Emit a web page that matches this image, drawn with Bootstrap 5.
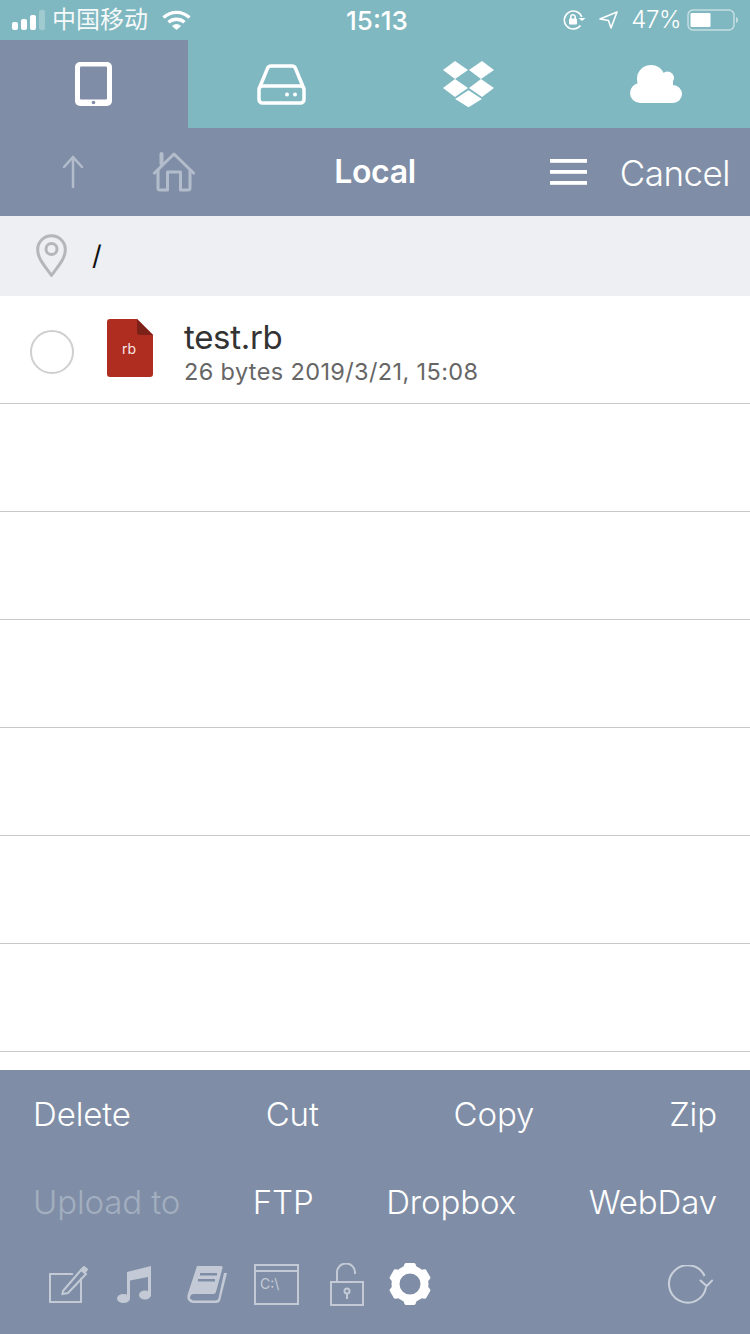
<!DOCTYPE html>
<html lang="en">
<head>
    <meta charset="UTF-8">
    <meta name="viewport" content="width=device-width, initial-scale=1.0">
    <title>Local files</title>
    <link href="https://cdn.jsdelivr.net/npm/bootstrap@5.3.0/dist/css/bootstrap.min.css" rel="stylesheet">
    <style>
        body {
            background-color: #fff;
            font-family: Inter, "Noto Sans CJK SC", sans-serif;
        }
        svg { display: block; flex: none; }
        .app-page { height: 1334px; width: 750px; overflow: hidden; }
        .status-strip { height: 40px; background: #7fb8c0; color: #fff; font-size: 24px; position: relative; padding: 0 12px; }
        .signal-bars { gap: 3px; margin-right: 8px; }
        .carrier-name { font-size: 24px; letter-spacing: 0; margin-right: 14px; opacity: .92; margin-left: -1px; }
        .clock-text { position: absolute; left: 0; right: 0; text-align: center; font-size: 26px; font-weight: 500; padding-left: 4px; }
        .lock-icon { margin-left: auto; margin-right: 13px; }
        .pct-text { margin: 0 6px 0 13px; font-size: 24px; letter-spacing: -.4px; font-weight: 300; }
        .tab-strip { height: 88px; background: #7fb8c0; }
        .tab-cell { height: 88px; }
        .tab-on { background: #7f8ea6; }
        .title-strip { height: 88px; background: #7f8ea6; color: #fff; position: relative; }
        .title-text { position: absolute; left: 0; right: 0; text-align: center; font-size: 32px; font-weight: 600; letter-spacing: -.4px; }
        .up-icon { margin-left: 62px; }
        .home-icon { margin-left: 68px; }
        .menu-icon { margin-left: auto; margin-right: 33px; }
        .cancel-text { font-size: 35px; font-weight: 300; margin-right: 20px; margin-top: 2px; letter-spacing: -.5px; }
        .path-strip { height: 80px; background: #edeff3; padding-left: 36px; }
        .path-text { margin-left: 25px; font-size: 27px; color: #111; font-weight: 400; }
        .file-rows { flex: 1 1 auto; overflow: hidden; }
        .file-rows .list-group-item { height: 108px; padding: 0; border-color: #c8c8c8; border-width: 0 0 1px; }
        .file-rows .list-group-item:last-child { border-bottom-width: 1px; }
        .pick-ring { width: 44px; height: 44px; border-radius: 50%; border: 2px solid #cfcfcf; margin: 4px 33px 0 30px; }
        .file-badge { margin-right: 31px; margin-bottom: 4px; }
        .file-info { margin-top: 8px; }
        .file-title { font-size: 33px; line-height: 36px; color: #333; letter-spacing: -.3px; }
        .file-meta { font-size: 23.5px; line-height: 34px; color: #666; letter-spacing: .37px; }
        .tool-strip { height: 264px; background: #7f8ea6; color: #fff; padding: 0 33px; }
        .tool-line { height: 88px; font-size: 33px; font-weight: 300; letter-spacing: -.1px; padding-top: 2px; }
        .tool-off { color: #a3aec0; }
        .icon-line { height: 76px; margin-left: 16px; margin-right: 4px; }
        .ic-music { margin-left: 29px; }
        .ic-book { margin-left: 36px; }
        .ic-term { margin-left: 27px; }
        .ic-lock { margin-left: 31px; }
        .ic-gear { margin-left: 25px; }
        .ic-sync { margin-left: auto; }
    </style>
</head>
<body>
<div class="app-page d-flex flex-column">

    <div class="status-strip d-flex align-items-center">
        <div class="signal-bars d-flex align-items-end">
            <svg width="33" height="20" viewBox="0 0 33 20">
                <rect x="0" y="12" width="6" height="8" rx="2" fill="#fff"/>
                <rect x="9" y="9" width="6" height="11" rx="2" fill="#fff"/>
                <rect x="18" y="5" width="6" height="15" rx="2" fill="#fff"/>
                <rect x="27" y="0" width="6" height="20" rx="2" fill="#fff" opacity=".25"/>
            </svg>
        </div>
        <span class="carrier-name">中国移动</span>
        <svg width="29" height="20" viewBox="0 0 29 20" fill="none" stroke="#fff" stroke-width="3.4">
            <path d="M1.500 7.500C9 .6 20 .6 27.500 7.500"/>
            <path d="M6.500 12.300C11 8.300 18 8.300 22.500 12.300"/>
            <path d="M10.500 16 14.500 19.500 18.500 16C16 14 13 14 10.500 16Z" fill="#fff" stroke-width="1"/>
        </svg>
        <span class="clock-text">15:13</span>
        <svg class="lock-icon" width="23" height="20" viewBox="0 0 23 20" fill="none" stroke="#fff" stroke-width="1.600">
            <path d="M17.500 15.500A9 9 0 1 1 18.800 7"/>
            <path d="M15.500 8 19 11 22.500 8" fill="#fff" stroke="none"/>
            <rect x="6" y="8.500" width="8" height="6" rx="1" fill="#fff" stroke="none"/>
            <path d="M7.800 9V7a2.200 2.200 0 0 1 4.400 0v2"/>
        </svg>
        <svg width="19" height="18" viewBox="0 0 19 18" fill="none" stroke="#fff" stroke-width="1.600" stroke-linejoin="round">
            <path d="M18 1 1 8 9.500 9.500 12 17Z"/>
        </svg>
        <span class="pct-text">47%</span>
        <svg width="51" height="22" viewBox="0 0 51 22">
            <rect x="1" y="1" width="46" height="20" rx="5" fill="none" stroke="#fff" stroke-opacity=".55" stroke-width="1.500"/>
            <rect x="3.500" y="4" width="20" height="14" rx="1" fill="#fff"/>
            <path d="M49 8c1.500 .5 2 1.500 2 3s-.5 2.500-2 3Z" fill="#fff" opacity=".55"/>
        </svg>
    </div>

    <div class="tab-strip row g-0">
        <div class="col-3 tab-cell tab-on d-flex align-items-center justify-content-center">
            <svg width="37" height="44" viewBox="0 0 37 44">
                <rect width="37" height="44" rx="5" fill="#fff"/>
                <rect x="5" y="4.500" width="27" height="33" rx="1" fill="#7f8ea6"/>
                <circle cx="18.500" cy="40.500" r="1.800" fill="#7f8ea6"/>
            </svg>
        </div>
        <div class="col-3 tab-cell d-flex align-items-center justify-content-center">
            <svg width="49" height="41" viewBox="0 0 49 41" fill="none" stroke="#fff" stroke-width="3.500">
                <path d="M2 25 10.500 4.500Q11.300 2 14 2H35Q37.700 2 38.500 4.500L47 25"/>
                <rect x="2" y="22" width="45" height="17" rx="3.500"/>
                <circle cx="30" cy="30.500" r="2" fill="#fff" stroke="none"/>
                <circle cx="38" cy="30.500" r="2" fill="#fff" stroke="none"/>
            </svg>
        </div>
        <div class="col-3 tab-cell d-flex align-items-center justify-content-center">
            <svg width="51" height="47" viewBox="0 0 51 47" fill="#fff">
                <path d="M12 0 25 9 12 18 0 9Z"/>
                <path d="M39 0 51 9 38 18 26 9Z"/>
                <path d="M12 18 25 27 12 36 0 27Z"/>
                <path d="M38 18 51 27 39 36 26 27Z"/>
                <path d="M25.500 28.500 40 38 25.500 47 11 38Z" stroke="#7fb8c0" stroke-width="1.200" stroke-linejoin="round"/>
            </svg>
        </div>
        <div class="col-3 tab-cell d-flex align-items-center justify-content-center">
            <svg width="52" height="38" viewBox="0 0 52 38" fill="#fff">
                <circle cx="21" cy="14" r="14"/>
                <circle cx="37.500" cy="13" r="6.500"/>
                <circle cx="10" cy="28" r="10"/>
                <circle cx="43" cy="29" r="9"/>
                <rect x="10" y="16" width="33" height="22"/>
            </svg>
        </div>
    </div>

    <div class="title-strip d-flex align-items-center">
        <svg class="up-icon" width="22" height="34" viewBox="0 0 22 34" fill="none" stroke="#b3bccb" stroke-width="2.500" stroke-linecap="round" stroke-linejoin="round">
            <path d="M11 32V2M2 12 11 2 20 12"/>
        </svg>
        <svg class="home-icon" width="44" height="40" viewBox="0 0 44 40" fill="none" stroke="#b3bccb" stroke-width="3" stroke-linejoin="round">
            <path d="M1.500 22 22 2 42.500 22"/>
            <path d="M9.500 2V12" stroke-width="4" stroke-linecap="round"/>
            <path d="M6 17V36Q6 38 8 38H15.500V20H28.500V38H36Q38 38 38 36V17"/>
        </svg>
        <span class="title-text">Local</span>
        <svg class="menu-icon" width="37" height="26" viewBox="0 0 37 26" fill="#fff">
            <rect y="0" width="37" height="3.800"/>
            <rect y="11" width="37" height="3.800"/>
            <rect y="22" width="37" height="3.800"/>
        </svg>
        <span class="cancel-text">Cancel</span>
    </div>

    <div class="path-strip d-flex align-items-center">
        <svg width="31" height="44" viewBox="0 0 31 44" fill="none" stroke="#b4b6ba" stroke-width="3">
            <path d="M15.500 41.500C8 31 1.700 24.500 1.700 15.500A13.800 13.800 0 0 1 29.300 15.500C29.300 24.500 23 31 15.500 41.500Z" stroke-linejoin="round"/>
            <circle cx="15.500" cy="15" r="5.500"/>
        </svg>
        <span class="path-text">/</span>
    </div>

    <div class="file-rows">
        <ul class="list-group list-group-flush">
            <li class="list-group-item d-flex align-items-center">
                <span class="pick-ring"></span>
                <svg class="file-badge" width="46" height="58" viewBox="0 0 46 58">
                    <path d="M3 0H30L46 16V55Q46 58 43 58H3Q0 58 0 55V3Q0 0 3 0Z" fill="#ae2c20"/>
                    <path d="M30 0 46 16H33Q30 16 30 13Z" fill="#7c2117"/>
                    <text x="22" y="35" text-anchor="middle" font-family="Inter, sans-serif" font-size="14" fill="#f8e8e5">rb</text>
                </svg>
                <div class="file-info">
                    <div class="file-title">test.rb</div>
                    <div class="file-meta">26 bytes 2019/3/21, 15:08</div>
                </div>
            </li>
            <li class="list-group-item"></li>
            <li class="list-group-item"></li>
            <li class="list-group-item"></li>
            <li class="list-group-item"></li>
            <li class="list-group-item"></li>
            <li class="list-group-item"></li>
        </ul>
    </div>

    <div class="tool-strip">
        <div class="tool-line d-flex align-items-center justify-content-between">
            <span>Delete</span><span>Cut</span><span>Copy</span><span>Zip</span>
        </div>
        <div class="tool-line d-flex align-items-center justify-content-between">
            <span class="tool-off">Upload to</span><span>FTP</span><span>Dropbox</span><span>WebDav</span>
        </div>
        <div class="icon-line d-flex align-items-center">
            <svg width="39" height="37" viewBox="0 0 39 37" fill="none" stroke="#c3cad6" stroke-width="2">
                <path d="M32 12V36H1V8H24"/>
                <path d="M14 25 32 4 37 8 19 27 13.500 28Z" fill="none"/>
                <path d="M33 3 35 1 38 3.500 36 6Z" fill="#c3cad6"/>
            </svg>
            <svg class="ic-music" width="34" height="37" viewBox="0 0 34 37" fill="#c3cad6">
                <path d="M10 6 34 0V30H31V11L13 14.500V33H10Z"/>
                <ellipse cx="6.500" cy="32.500" rx="6.500" ry="4.500"/>
                <ellipse cx="28" cy="29" rx="6" ry="4.500"/>
            </svg>
            <svg class="ic-book" width="40" height="37" viewBox="0 0 40 37" fill="#c3cad6">
                <path d="M10 0H34Q36 0 35.500 2L29 26Q28.500 28 26 28H7Q3 28 3 32 3 34 6 34H1Q0 32 .5 29Z"/>
                <path d="M37 7H40L33.500 33Q33 37 29 37H7Q2 37 1 33H4Q5 34.500 7 34.500H28Q31 34.500 31.500 32Z"/>
                <rect x="13" y="7" width="17" height="2.500" fill="#7f8ea6"/>
                <rect x="11" y="13" width="17" height="2.500" fill="#7f8ea6"/>
            </svg>
            <svg class="ic-term" width="45" height="41" viewBox="0 0 45 41" fill="none" stroke="#c3cad6" stroke-width="2">
                <rect x="1" y="1" width="43" height="39"/>
                <path d="M1 7H44"/>
                <text x="6" y="25" font-family="Inter, sans-serif" font-size="14" fill="#c3cad6" stroke="none">C:\</text>
            </svg>
            <svg class="ic-lock" width="34" height="43" viewBox="0 0 34 43" fill="none" stroke="#c3cad6" stroke-width="2">
                <rect x="1" y="19" width="32" height="23"/>
                <path d="M7 19V10a9 9 0 0 1 18 -1V11"/>
                <circle cx="17" cy="28" r="2.500"/>
                <path d="M17 30V36"/>
            </svg>
            <svg class="ic-gear" width="42" height="42" viewBox="0 0 42 42">
                <circle cx="21" cy="21" r="14.500" fill="none" stroke="#fff" stroke-width="8"/>
                <g fill="#fff">
                    <path d="M13 8 15.500 1Q16 0 17 0H25Q26 0 26.500 1L29 8Z"/>
                    <path d="M13 8 15.500 1Q16 0 17 0H25Q26 0 26.500 1L29 8Z" transform="rotate(60 21 21)"/>
                    <path d="M13 8 15.500 1Q16 0 17 0H25Q26 0 26.500 1L29 8Z" transform="rotate(120 21 21)"/>
                    <path d="M13 8 15.500 1Q16 0 17 0H25Q26 0 26.500 1L29 8Z" transform="rotate(180 21 21)"/>
                    <path d="M13 8 15.500 1Q16 0 17 0H25Q26 0 26.500 1L29 8Z" transform="rotate(240 21 21)"/>
                    <path d="M13 8 15.500 1Q16 0 17 0H25Q26 0 26.500 1L29 8Z" transform="rotate(300 21 21)"/>
                </g>
            </svg>
            <svg class="ic-sync" width="45" height="39" viewBox="0 0 45 39" fill="none" stroke="#c9d0db" stroke-width="2">
                <path d="M38.100 22.200A18.700 18.700 0 1 1 36.600 11"/>
                <path d="M32 15 38.700 21 44.700 15"/>
            </svg>
        </div>
    </div>
</div>
<script src="https://cdn.jsdelivr.net/npm/bootstrap@5.3.0/dist/js/bootstrap.bundle.min.js"></script>
</body>
</html>
